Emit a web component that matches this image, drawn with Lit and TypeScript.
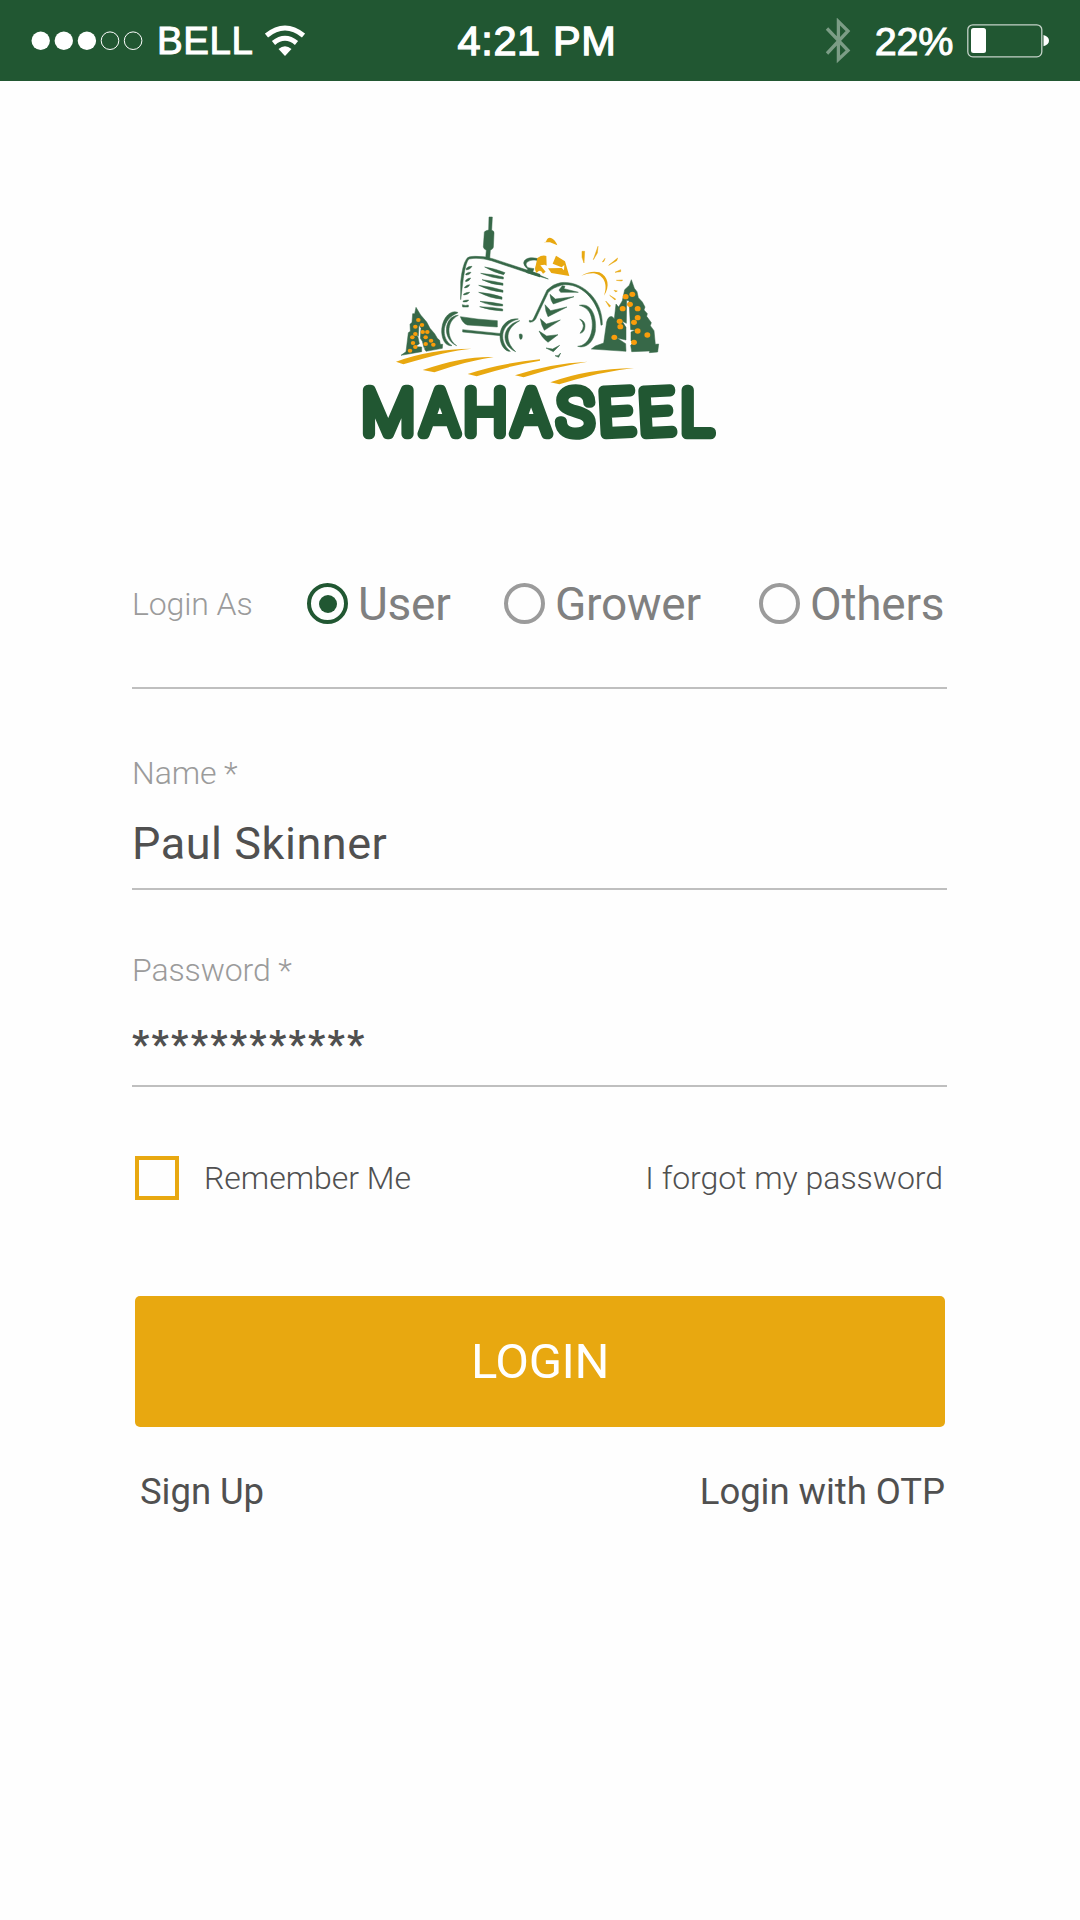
import { LitElement, html, css, svg } from "lit";
import { customElement, property, state } from "lit/decorators.js";
import { classMap } from "lit/directives/class-map.js";

@customElement("status-bar")
class StatusBar extends LitElement {
  static styles = css`
    :host {
      display: grid;
      grid-template-columns: 1fr auto 1fr;
      align-items: center;
      box-sizing: border-box;
      height: 81px;
      padding: 0 31px;
      background: #215732;
      color: #fff;
      font-family: "Liberation Sans", sans-serif;
      -webkit-text-stroke: 1px #fff;
    }
    svg { display: block; -webkit-text-stroke: 0; }
    .left, .right { display: flex; align-items: center; }
    .right { justify-content: flex-end; }
    .carrier { font-size: 38.5px; line-height: 44px; letter-spacing: 0.6px; margin: 1px 11px 0 13px; }
    .time { font-size: 41.5px; line-height: 48px; letter-spacing: 0.6px; margin-left: -6px; -webkit-text-stroke-width: 1.3px; }
    .percent { font-size: 39.5px; line-height: 44px; letter-spacing: -0.3px; margin: 0 14px 0 24px; }
  `;

  render() {
    return html`
      <div class="left">
        <svg width="113" height="20" viewBox="0 0 113 20">
          ${[0, 1, 2, 3, 4].map((i) =>
            i < 3
              ? svg`<circle cx=${9.7 + i * 23.1} cy="9.7" r="9.2" fill="#fff" />`
              : svg`<circle cx=${9.7 + i * 23.1} cy="9.7" r="8.8" fill="none" stroke="#fff" stroke-width="1" />`
          )}
        </svg>
        <span class="carrier">BELL</span>
        <svg width="40" height="32" viewBox="0 0 40 32">
          <g fill="none" stroke="#fff" stroke-width="5">
            <path d="M1.500 10.500Q20 -4.500 38.500 10.500" />
            <path d="M8.500 18Q20 8.500 31.500 18" />
          </g>
          <path d="M13.500 24Q20 18.500 26.500 24L20 31Z" fill="#fff" />
        </svg>
      </div>
      <span class="time">4:21 PM</span>
      <div class="right">
        <svg width="26" height="46" viewBox="0 0 26 46">
          <path d="M2 10.500L23 32.500L13.400 41.500V3.500L23 13L2 35.500" fill="none" stroke="#7c9d86" stroke-width="3.300" />
        </svg>
        <span class="percent">22%</span>
        <svg width="82" height="34" viewBox="0 0 82 34">
          <rect x="0.800" y="0.800" width="74" height="32" rx="5" fill="none" stroke="#c4d2c8" stroke-width="1.300" />
          <rect x="4" y="4" width="15" height="25" rx="2.500" fill="#fff" />
          <path d="M76.500 11Q82 12.500 82 16.600T76.500 22.300Z" fill="#fff" />
        </svg>
      </div>
    `;
  }
}

@customElement("brand-logo")
class BrandLogo extends LitElement {
  static styles = css`
    :host { display: block; }
    .art { display: block; width: 380px; height: 265px; overflow: visible; }
    .ink { fill: #376848; stroke: #376848; stroke-width: 1.5px; }
    .wordmark {
      font-family: Roboto, sans-serif;
      font-size: 182px;
      font-weight: 100;
      fill: #215732;
      stroke: #215732;
      stroke-width: 32px;
      stroke-linejoin: round;
    }
  `;

  private dots(points: number[][], r: number) {
    return points.map(([x, y]) => svg`<ellipse cx=${x} cy=${y} rx=${r + 0.8} ry=${r} fill="#f99d0b" />`);
  }

  render() {
    const leftFruit = [[205, 345], [216, 360], [196, 365], [218, 381], [232, 381], [196, 387], [187, 397], [227, 397], [243, 407], [189, 414], [227, 417], [250, 419], [196, 426], [180, 437]];
    const rightFruit = [[307, 268], [287, 275], [300, 298], [278, 311], [323, 311], [323, 338], [269, 349], [312, 352], [271, 365], [323, 378], [352, 390], [253, 397], [312, 412]];
    return html`
      <svg class="art" viewBox="0 0 1140 795">
        <g class="ink">
          <path d="M417 36H427L425 76Q433 78 432 84L430 127Q429 132 421 136L419 163L407 160L409 136Q401 132 400 126L403 82Q404 77 416 75Z" />
          <path d="M332 284L332 230Q337 180 350 161Q355 154 375 154Q400 153 428 161L570 208V216L424 167Q385 156 357 162Q348 168 340 220Z" />
          <path d="M349 190Q356 183 366 184Q362 193 349 195ZM347 207Q355 200 363 202Q359 211 348 210ZM347 226Q354 219 362 219Q359 228 347 230ZM344 246Q351 239 359 239Q356 248 344 249ZM341 267Q350 261 359 262Q355 269 341 270ZM339 288Q347 285 356 285Q354 292 340 291ZM337 299Q346 303 355 300V306L338 306Z" />
          <path d="M404 186Q440 192 465 203L461 209Q433 203 404 186ZM392 205Q430 208 460 216V222Q425 219 392 205ZM396 224Q430 228 459 235V241Q425 239 396 224ZM386 241Q425 245 459 256V262Q420 259 386 241ZM386 262Q425 265 456 276V283Q420 280 386 262ZM390 289Q425 291 458 298V303Q420 303 390 289ZM389 305Q425 306 458 312V318Q420 316 389 305Z" />
          <path d="M331 335Q385 344 442 347V366L352 360Q338 355 331 335ZM338 374Q395 380 455 386L452 392L338 381Z" />
          <path d="M323 322C298 313 274 344 275 382C277 410 290 424 306 422C270 400 276 340 323 324ZM325 331C283 332 274 402 320 422C292 405 285 350 325 331Z" />
          <path d="M505 342C475 338 449 362 450 395C451 423 467 440 481 439C447 412 448 358 505 342ZM509 347C455 360 450 420 497 440C465 410 464 372 509 347ZM508 388Q517 384 517 393Q517 404 511 403Q507 397 508 388Z" />
          <path d="M198 307L212 330L230 351L240 370L254 386L262 400L269 406L271 418H278L277 430L228 439L223 431L228 426L222 428L217 409L211 400L213 370L207 359L205 394L193 382L204 397L208 416L195 425L215 426L215 440L153 451L168 440L175 383L181 379L180 358L186 352L188 326H194Z" />
        </g>
        <g class="ink" transform="translate(540 0)">
          <path d="M-19 174C-17 155 15 155 32 165L35 172C12 160 -3 166 -11 174C-14 179 -8 186 -6 188L12 191L8 201L55 222L-10 203L-12 198L-6 193Q-18 184 -19 174Z" />
          <path d="M-2 346Q6 350 10 342L51 255Q69 237 91 233C155 225 218 282 217 359L213 361C208 286 151 231 96 240Q67 248 55 262L17 342Q10 354 -2 351Z" />
          <path d="M87 255L97 242L105 244L102 251L145 262L92 262ZM60 268L76 282L132 275L70 297Q62 289 60 268ZM45 299L62 317L111 306L54 335Q46 320 45 299ZM31 341L49 357L91 345L43 376Q34 361 31 341ZM27 378L50 393L84 389L54 412Q35 398 27 378ZM48 429L68 432L89 421L70 440ZM75 452L84 452L92 444L86 457Z" />
          <path d="M148 301C185 292 201 335 196 379C190 411 169 432 143 424C178 422 191 378 186 346C182 317 168 307 148 301ZM149 342Q166 348 165 364Q164 383 150 385Q171 361 149 342Z" />
          <path d="M304 224L313 250L321 260L325 278L337 291L345 306L342 315L352 326L350 334L364 353L361 362L372 377L376 418L386 417L383 441L358 443L359 438L305 440L302 421L314 409L303 408V381L316 375L302 374L297 287L290 286L289 355L276 348L288 367V405L261 399L287 416L288 439L184 432L196 423L221 414L230 351Q235 332 247 335L253 341L258 297L266 306L277 287L284 254L298 241Z" />
        </g>
        <g fill="#e8a810">
          <path d="M138 470Q240 432 365 431Q290 438 160 478ZM218 495Q340 453 431 456Q350 468 253 502ZM353 507Q450 475 570 463V467Q480 482 380 514ZM495 511Q600 475 713 470Q620 484 521 517ZM601 532Q710 492 852 489Q750 500 628 538Z" />
          <g transform="translate(540 0)">
            <path d="M41 112L48 110Q52 96 63 99Q75 103 82 121L60 112ZM22 159Q37 149 49 153L50 182L44 179L31 181L47 200L39 206Q31 190 20 204Q12 195 17 182ZM78 152L105 169L118 213L64 204L54 190L95 189L102 196L103 180L95 187L68 176Z" />
            <path d="M154 212Q181 196 208 202C235 213 241 246 222 272C235 238 221 210 192 205Q174 204 154 212Z" />
            <path stroke="#e8a810" stroke-width="1.500" d="M156 139H164L162 174L156 157ZM190 164L204 124L202 144ZM217 171L225 160L222 169ZM236 181L263 159L260 167ZM255 202L272 194V200ZM259 226L278 225L275 228ZM252 256L262 258L257 261ZM239 271L257 282L255 285ZM227 288L242 303L238 306Z" />
          </g>
        </g>
        ${this.dots(leftFruit, 6)}
        <g transform="translate(540 0)">${this.dots(rightFruit, 8)}</g>
        <text class="wordmark" y="688" x="37 215 342 489 622 750 870 993" rotate="0 0 0 0 0 -3 -3 0">MAHASEEL</text>
      </svg>
    `;
  }
}

@customElement("form-field")
class FormField extends LitElement {
  static styles = css`
    :host {
      display: flex;
      flex-direction: column;
      box-sizing: border-box;
      border-bottom: 2px solid #bfbfbf;
    }
    .label { font-weight: 300; font-size: 32px; line-height: 38px; letter-spacing: -0.1px; color: #9b9b9b; }
    .value { margin-top: 26px; font-size: 45px; line-height: 52px; letter-spacing: 0.55px; color: #505050; }
    .secret { margin-top: 30px; font-size: 38px; font-weight: 700; letter-spacing: 2.3px; }
  `;
  @property() label = "";
  @property() value = "";
  @property({ type: Boolean }) secret = false;

  render() {
    return html`
      <span class="label">${this.label}</span>
      <span class=${classMap({ value: true, secret: this.secret })}>${this.value}</span>
    `;
  }
}

@customElement("app-root")
class AppRoot extends LitElement {
  static styles = css`
    :host {
      display: flex;
      flex-direction: column;
      min-height: 1920px;
      background: #fefefe;
      font-family: Roboto, sans-serif;
      color: #505050;
    }
    .logo { align-self: center; margin-top: 124px; }
    .form { display: flex; flex-direction: column; padding: 0 133px 0 132px; margin-top: 103px; }
    .roles {
      display: grid;
      grid-template-columns: 175px 197px 255px 1fr;
      align-items: center;
      height: 61px;
      padding-bottom: 53px;
      border-bottom: 2px solid #bfbfbf;
    }
    .caption { font-size: 32px; font-weight: 300; line-height: 40px; letter-spacing: -0.1px; color: #9b9b9b; margin-top: 1px; }
    .role { display: flex; align-items: center; gap: 10px; font-size: 46px; line-height: 54px; letter-spacing: -0.25px; color: #808080; cursor: pointer; }
    .ring {
      display: flex;
      flex: none;
      align-items: center;
      justify-content: center;
      box-sizing: border-box;
      width: 41px;
      height: 41px;
      border: 4px solid #9b9b9b;
      border-radius: 50%;
    }
    .ring.on { border-color: #215732; }
    .ring.on::after { content: ""; width: 18px; height: 18px; border-radius: 50%; background: #215732; }
    .name { height: 136px; margin-top: 65px; }
    .password { height: 136px; margin-top: 61px; }
    .options { display: flex; align-items: center; justify-content: space-between; margin: 69px 4px 0 3px; height: 44px; font-size: 32px; font-weight: 300; letter-spacing: -0.03px; }
    .remember { display: flex; align-items: center; gap: 25px; }
    .box { box-sizing: border-box; width: 44px; height: 44px; border: 4px solid #e8a810; }
    .submit {
      height: 131px;
      margin: 96px 2px 0 3px;
      border: 0;
      border-radius: 5px;
      background: #e8a810;
      color: #fff;
      font: 400 49px/58px Roboto, sans-serif;
      letter-spacing: -0.4px;
    }
    .links { display: flex; justify-content: space-between; margin: 44px 2px 0 8px; font-size: 36.5px; line-height: 42px; letter-spacing: -0.05px; }
  `;

  @state() private role = "User";

  render() {
    return html`
      <status-bar></status-bar>
      <brand-logo class="logo"></brand-logo>
      <div class="form">
        <div class="roles">
          <span class="caption">Login As</span>
          ${["User", "Grower", "Others"].map(
            (name) => html`
              <label class="role" @click=${() => (this.role = name)}>
                <span class=${classMap({ ring: true, on: this.role === name })}></span>
                <span>${name}</span>
              </label>
            `
          )}
        </div>
        <form-field class="name" label="Name *" value="Paul Skinner"></form-field>
        <form-field class="password" label="Password *" value="************" secret></form-field>
        <div class="options">
          <label class="remember"><span class="box"></span><span>Remember Me</span></label>
          <span>I forgot my password</span>
        </div>
        <button class="submit">LOGIN</button>
        <div class="links"><span>Sign Up</span><span>Login with OTP</span></div>
      </div>
    `;
  }
}
